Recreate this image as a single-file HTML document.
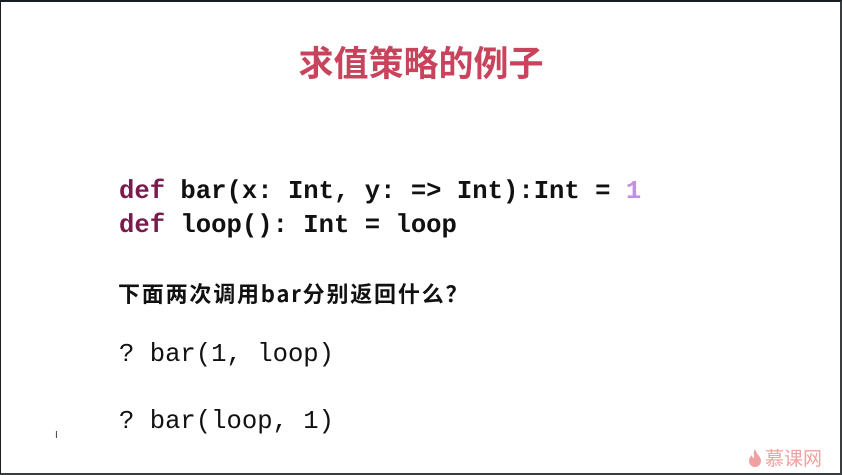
<!DOCTYPE html>
<html><head><meta charset="utf-8"><style>
body{margin:0;width:842px;height:475px;overflow:hidden;background:#fff;position:relative;font-family:"Liberation Sans","Noto Sans CJK SC",sans-serif}
.frame{position:absolute;left:0;top:0;width:842px;height:475px;box-sizing:border-box;border-top:2px solid #1a1d20;border-left:1px solid #1a1d20;border-right:2px solid #3a3d40;border-bottom:2px solid #3a3d40}
.t{position:absolute;left:0;width:842px;top:37px;text-align:center;font-size:35px;font-weight:bold;color:#c8435c;font-family:"Noto Sans CJK SC",sans-serif;line-height:50px}
.c{position:absolute;left:119px;font-family:"Liberation Mono",monospace;font-size:25.6px;color:#111;white-space:pre;line-height:30px}
.b{font-weight:bold}
.k{color:#7a1b4d}
.n{color:#c08fe6}
.q{position:absolute;left:118px;top:278px;font-size:22px;font-weight:bold;color:#111;font-family:"Noto Sans CJK SC",sans-serif;line-height:30px;letter-spacing:1.8px}
.logo{position:absolute;left:748px;top:444px;color:#f0a0a0;font-size:19px;font-family:"Noto Sans CJK SC",sans-serif;display:flex;align-items:center}
</style></head><body>
<div class="frame"></div>
<div class="t">求值策略的例子</div>
<div class="c b" style="top:177px"><span class="k">def</span> bar(x: Int, y: =&gt; Int):Int = <span class="n">1</span></div>
<div class="c b" style="top:211px"><span class="k">def</span> loop(): Int = loop</div>
<div class="q">下面两次调用bar分别返回什么？</div>
<div class="c" style="top:340px">? bar(1, loop)</div>
<div class="c" style="top:407px">? bar(loop, 1)</div>
<div style="position:absolute;left:55px;top:430px;font-size:10px;color:#333">I</div>
<div class="logo"><svg width="14" height="20" viewBox="0 0 14 20"><path d="M7 1C8 6 13 8 13 13a6 6 0 0 1-12 0c0-3 2-5 3-6 0 2 1 3 2 3C6 7 5 4 7 1z" fill="#f0a0a0"/></svg><span style="margin-left:3px">慕课网</span></div>
</body></html>
